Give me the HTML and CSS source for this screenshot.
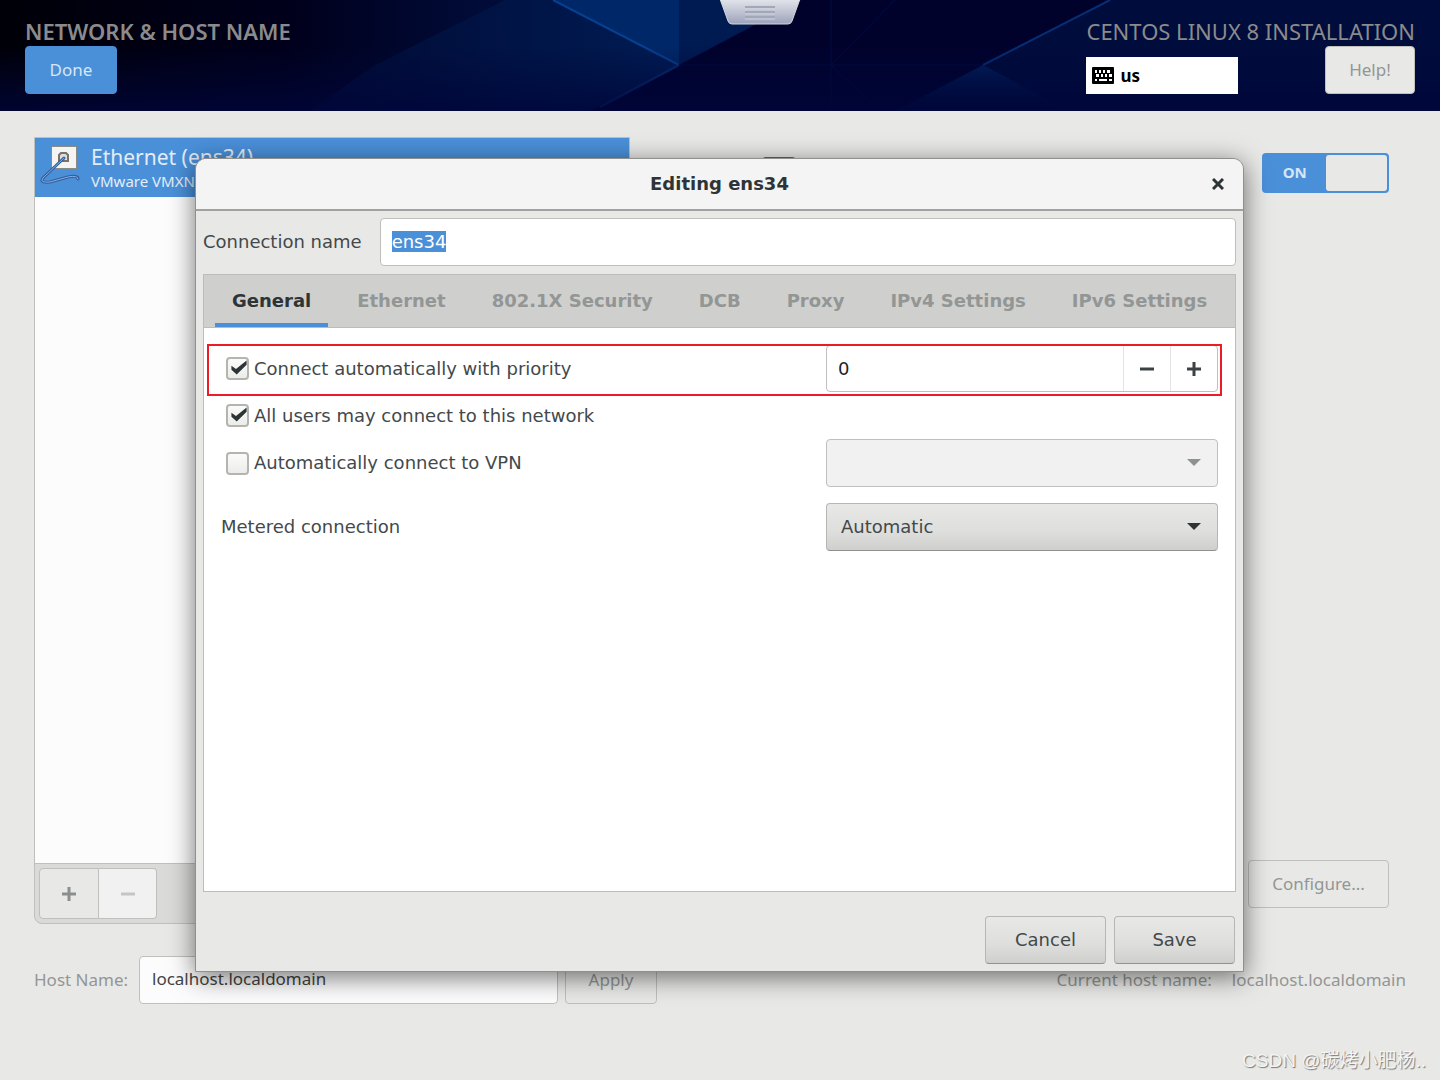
FILE: index.html
```html
<!DOCTYPE html>
<html lang="en">
<head>
<meta charset="utf-8">
<meta name="viewport" content="width=device-width, initial-scale=1">
<title>Network &amp; Host Name</title>
<link rel="stylesheet" href="styles.css">
</head>
<body class="page">
<header class="topbar">
  <svg class="topbar-art" viewBox="0 0 1440 111" preserveAspectRatio="none" aria-hidden="true">
    <defs>
      <linearGradient id="sky" x1="0" x2="1" y1="0" y2="0">
        <stop offset="0" stop-color="#000008"/><stop offset=".2" stop-color="#00001c"/>
        <stop offset=".32" stop-color="#000a35"/><stop offset=".46" stop-color="#001548"/>
        <stop offset=".48" stop-color="#00002a"/><stop offset=".7" stop-color="#000530"/>
        <stop offset="1" stop-color="#000a38"/>
      </linearGradient>
      <linearGradient id="facet" x1="0" x2="1" y1="0" y2="0">
        <stop offset="0" stop-color="#000a34"/><stop offset="1" stop-color="#001c54"/>
      </linearGradient>
      <linearGradient id="fade" x1="0" x2="0" y1="0" y2="1">
        <stop offset="0" stop-color="#00083a" stop-opacity="0"/><stop offset="1" stop-color="#00053a" stop-opacity=".8"/>
      </linearGradient>
      <linearGradient id="ray" x1="0" x2="0" y1="0" y2="1">
        <stop offset="0" stop-color="#00205c"/><stop offset="1" stop-color="#000a38"/>
      </linearGradient>
    </defs>
    <rect width="1440" height="111" fill="url(#sky)"/>
    <path d="M310 111 375 65 505 0H555L679 65 595 111Z" fill="url(#facet)"/>
    <path d="M553 0H679V65Z" fill="#002868"/>
    <path d="M679 0H802L757 27 679 65Z" fill="#001a52"/>
    <path d="M679 65 802 0H1110L983 65 895 111H590Z" fill="#00022c"/>
    <path d="M983 65 1110 0H1440V111H1070Z" fill="#000c3c"/>
    <path d="M983 65 895 111H1070Z" fill="url(#ray)"/>
    <path d="M553 0 679 65" stroke="#084090" stroke-width="2" fill="none"/>
    <path d="M679 65 600 107M983 65 1110 0" stroke="#062e74" stroke-width="2" fill="none"/>
    <path d="M679 65H983M831 0V111M831 65 895 0M831 65 868 100" stroke="#000c40" fill="none"/>
    <rect y="45" width="1440" height="66" fill="url(#fade)"/>
  </svg>
  <div class="topbar-left">
    <h1 class="spoke-title">NETWORK &amp; HOST NAME</h1>
    <button class="btn btn-done" type="button">Done</button>
  </div>
  <div class="topbar-right">
    <p class="distro">CENTOS LINUX 8 INSTALLATION</p>
    <div class="topbar-tools">
      <div class="layout-indicator">
        <svg class="keyboard-icon" viewBox="0 0 22 17" aria-hidden="true">
          <rect width="22" height="17" rx="1" fill="#000"/>
          <path d="M3 3h2v3H3zM7 3h2v3H7zM11 3h2v3h-2zM15 3h3v3h-3zM4 7h3v3H4zM9 7h2v3H9zM13 7h2v3h-2zM17 7h3v3h-3zM3 12h2v2H3zM7 12h8v2H7zM17 12h3v2h-3z" fill="#fff"/>
        </svg>
        <span>us</span>
      </div>
      <button class="btn btn-help" type="button">Help!</button>
    </div>
  </div>
  <div class="vm-handle" aria-hidden="true">
    <svg viewBox="0 0 80 25">
      <defs><linearGradient id="tab" x1="0" x2="0" y1="0" y2="1"><stop offset="0" stop-color="#e4e6ec"/><stop offset="1" stop-color="#9da2ba"/></linearGradient></defs>
      <path d="M0-1H80L72 21Q71 24 68 24H12Q9 24 8 21Z" fill="url(#tab)" stroke="#d6d6dc"/>
      <path d="M25 7H55M25 12H55M25 17H55" stroke="#a2a8b8" stroke-width="2"/>
      <path d="M25 9H55M25 14H55M25 19H55" stroke="#cfd3de"/>
    </svg>
  </div>
</header>

<main class="spoke">
  <div class="network">
    <section class="devices" aria-label="Network devices">
      <div class="device-list">
        <div class="device">
          <svg class="device-icon" viewBox="0 0 40 44" aria-hidden="true">
            <rect x="11.500" y="3.500" width="25" height="22" fill="#f4f4f2" stroke="#8b8b86"/>
            <path d="M19 18V12L21 10H26L28 12V18Z" fill="#ddd" stroke="#77736c" stroke-width="2"/>
            <path d="M24 15 3 35Q-1 40 10 39L28 34Q38 32 38 36" fill="none" stroke="#315e9c" stroke-width="3" stroke-linecap="round"/>
            <path d="M24 15 3 35Q-1 40 10 39L28 34Q38 32 38 36" fill="none" stroke="#86aee4" stroke-linecap="round"/>
          </svg>
          <div class="device-text">
            <span class="device-name">Ethernet (ens34)</span>
            <span class="device-model">VMware VMXNET3 Ethernet Controller</span>
          </div>
        </div>
      </div>
      <div class="device-toolbar">
        <button class="tool" type="button" aria-label="Add device"><svg viewBox="0 0 16 16"><path d="M1 8H15M8 1V15" stroke="#8b8e8f" stroke-width="3"/></svg></button>
        <button class="tool tool-off" type="button" aria-label="Remove device" disabled><svg viewBox="0 0 16 16"><path d="M1 8H15" stroke="#c4c5c4" stroke-width="3"/></svg></button>
      </div>
    </section>
    <section class="details" aria-label="Device details">
      <div class="details-head">
        <span class="details-icon"></span>
        <label class="switch"><input class="switch-input" type="checkbox" role="switch" aria-label="Device enabled" checked><span class="switch-on">ON</span><span class="switch-knob"></span></label>
      </div>
      <button class="btn btn-flat btn-configure" type="button">Configure...</button>
    </section>
  </div>
  <form class="host">
    <label class="host-label" for="host">Host Name:</label>
    <input class="field host-input" id="host" type="text" value="localhost.localdomain">
    <button class="btn btn-flat btn-apply" type="button">Apply</button>
    <p class="current"><span>Current host name:</span><span>localhost.localdomain</span></p>
  </form>
</main>

<div class="dialog" role="dialog" aria-labelledby="dialog-title">
  <div class="titlebar">
    <h2 class="dialog-title" id="dialog-title">Editing ens34</h2>
    <button class="close" type="button" aria-label="Close"><svg viewBox="0 0 12 12"><path d="M1 1 11 11M11 1 1 11" stroke="#2e3436" stroke-width="3"/></svg></button>
  </div>
  <form class="dialog-body">
    <div class="name-row">
      <label for="conn">Connection name</label>
      <input class="field name-input" id="conn" type="text" value="ens34">
    </div>
    <div class="notebook">
      <div class="tabs" role="tablist">
        <button class="tab tab-active" type="button" role="tab" aria-selected="true">General</button>
        <button class="tab" type="button" role="tab">Ethernet</button>
        <button class="tab" type="button" role="tab">802.1X Security</button>
        <button class="tab" type="button" role="tab">DCB</button>
        <button class="tab" type="button" role="tab">Proxy</button>
        <button class="tab" type="button" role="tab">IPv4 Settings</button>
        <button class="tab" type="button" role="tab">IPv6 Settings</button>
      </div>
      <div class="tab-page">
        <div class="row row-marked">
          <label class="check"><input class="check-box" type="checkbox" checked>Connect automatically with priority</label>
          <div class="spin">
            <input class="spin-input" type="number" value="0" aria-label="Priority">
            <button class="spin-btn" type="button" aria-label="Decrease"><svg viewBox="0 0 16 16"><path d="M1 8H15" stroke="#3c4243" stroke-width="3"/></svg></button>
            <button class="spin-btn" type="button" aria-label="Increase"><svg viewBox="0 0 16 16"><path d="M1 8H15M8 1V15" stroke="#3c4243" stroke-width="3"/></svg></button>
          </div>
        </div>
        <div class="row">
          <label class="check"><input class="check-box" type="checkbox" checked>All users may connect to this network</label>
        </div>
        <div class="row">
          <label class="check"><input class="check-box" type="checkbox">Automatically connect to VPN</label>
          <div class="combo combo-off">
            <select class="combo-select" aria-label="VPN connection" disabled><option></option></select>
            <svg class="combo-arrow" viewBox="0 0 14 8"><path d="M0 0H14L7 7Z" fill="#8e9192"/></svg>
          </div>
        </div>
        <div class="row row-spaced">
          <label for="metered">Metered connection</label>
          <div class="combo">
            <select class="combo-select" id="metered"><option>Automatic</option><option>Yes</option><option>No</option></select>
            <svg class="combo-arrow" viewBox="0 0 14 8"><path d="M0 0H14L7 7Z" fill="#2e3436"/></svg>
          </div>
        </div>
      </div>
    </div>
    <div class="actions">
      <button class="action" type="button">Cancel</button>
      <button class="action" type="button">Save</button>
    </div>
  </form>
</div>

<p class="watermark">CSDN @碳烤小肥杨..</p>
<script src="script.js"></script>
</body>
</html>
```
FILE: styles.css
```css
* { box-sizing: border-box; }

.page {
  position: relative;
  display: flex;
  flex-direction: column;
  min-height: 100vh;
  margin: 0;
  background: #e8e8e6;
  color: #939695;
  font: 17px/24px "Noto Sans", "Open Sans", sans-serif;
}

h1, h2, p { margin: 0; }
button, input, select { font: inherit; color: inherit; margin: 0; }
svg { display: block; }

/* Top bar */
.topbar {
  position: relative;
  display: flex;
  justify-content: space-between;
  height: 111px;
  padding: 16px 25px;
}
.topbar-art { position: absolute; inset: 0; width: 100%; height: 100%; }
.topbar-left, .topbar-right { position: relative; display: flex; flex-direction: column; }
.topbar-left { align-items: flex-start; }
.spoke-title, .distro { font-size: 22px; line-height: 30px; color: #8b8b8b; }
.spoke-title { font-weight: 600; }
.distro { font-weight: 400; }
.topbar-tools { display: flex; justify-content: space-between; align-items: flex-end; }
.vm-handle { position: absolute; left: 50%; top: 0; width: 80px; }

.btn {
  height: 48px;
  padding: 0 22px;
  border: 1px solid #bfbfbb;
  border-radius: 4px;
  background: #e8e8e6;
}
.btn-done { width: 92px; border-color: #4a90d9; background: #4a90d9; color: #d8e5f3; }
.btn-help { width: 90px; }
.btn-flat { background: transparent; }

.layout-indicator {
  display: flex;
  align-items: center;
  gap: 6px;
  width: 152px;
  height: 37px;
  padding: 0 6px;
  background: #fff;
  color: #000;
  font-weight: 700;
}
.keyboard-icon { width: 22px; height: 17px; }

/* Spoke */
.spoke { flex: 1; display: flex; flex-direction: column; gap: 32px; padding: 26px 34px 76px; }
.network { flex: 1; display: flex; }
.devices {
  flex: 0 0 596px;
  display: flex;
  flex-direction: column;
  border: 1px solid #bfbfbb;
  border-radius: 0 0 8px 8px;
  background: #dadad8;
}
.device-list { flex: 1; border-bottom: 1px solid #bfbfbb; background: #fcfcfc; }
.device { display: flex; gap: 11px; height: 59px; padding: 5px; background: #4a90d9; color: #e4edf7; }
.device-icon { width: 40px; height: 44px; }
.device-text { display: flex; flex-direction: column; }
.device-name { font-size: 21px; line-height: 28px; }
.device-model { font-size: 15px; line-height: 21px; }
.device-toolbar { display: flex; height: 59px; padding: 4px; }
.tool {
  display: grid;
  place-items: center;
  width: 60px;
  height: 51px;
  padding: 0;
  border: 1px solid #bfbfbb;
  border-radius: 4px 0 0 4px;
  background: #e8e8e6;
}
.tool svg, .spin-btn svg { width: 16px; height: 16px; }
.tool-off { width: 58px; border-left: 0; border-radius: 0 4px 4px 0; background: #f1f1f1; }

.details { flex: 1; display: flex; flex-direction: column; justify-content: space-between; padding: 16px 17px 16px 132px; }
.details-head { display: flex; justify-content: space-between; align-items: flex-start; padding-bottom: 40px; }
.details-icon { width: 34px; height: 26px; margin-top: 4px; border-radius: 4px; background: #666; }
.switch {
  display: grid;
  grid-template-columns: 1fr 1fr;
  width: 127px;
  height: 40px;
  border: 2px solid #4a90d9;
  border-radius: 4px;
  background: #4a90d9;
}
.switch-input { grid-area: 1 / 1 / 2 / 3; width: 100%; height: 100%; margin: 0; opacity: 0; }
.switch-on { grid-area: 1 / 1; place-self: start center; line-height: 34px; font-size: 15px; font-weight: 700; color: #d8e5f3; }
.switch-knob { grid-area: 1 / 2; border-radius: 3px; background: #e8e8e6; }
.btn-configure { align-self: flex-end; width: 141px; }

.host { display: flex; align-items: center; }
.host-label { width: 105px; }
.field {
  height: 48px;
  padding: 0 12px;
  border: 1px solid #bfbfbb;
  border-radius: 4px;
  background: #fff;
  outline: 0;
}
.host-input { width: 419px; padding-bottom: 3px; background: #fcfcfc; color: #444; }
.btn-apply { width: 92px; margin-left: 7px; }
.current { display: flex; gap: 20px; margin-left: auto; }

/* Connection editor */
.dialog {
  position: absolute;
  top: 158px;
  left: 195px;
  right: 196px;
  border: 1px solid #8f8f8d;
  border-radius: 11px 11px 0 0;
  background: #e8e8e6;
  box-shadow: 0 5px 26px rgba(0, 0, 0, .55);
  color: #43494b;
  font: 18px/24px "DejaVu Sans", sans-serif;
}
.titlebar {
  display: grid;
  grid-template-columns: 50px 1fr 50px;
  align-items: center;
  height: 52px;
  border-bottom: 2px solid #a1a19f;
  border-radius: 10px 10px 0 0;
  background: #f4f4f4;
}
.dialog-title { grid-column: 2; font-size: 18px; font-weight: 700; line-height: 26px; text-align: center; color: #2e3436; }
.close { display: grid; place-items: center; width: 50px; height: 50px; padding: 0; border: 0; background: none; }
.close svg { width: 12px; height: 12px; }
.dialog-body { padding: 7px; }
.name-row { display: flex; align-items: center; gap: 18px; margin-bottom: 8px; }
.name-input { flex: 1; padding: 0 11px 2px; color: #2e3436; }
.name-input::selection { background: #4a90d9; color: #fff; }

.notebook { border: 1px solid #bcbcb9; background: #fff; }
.tabs { display: flex; gap: 12px; height: 53px; padding: 0 11px; border-bottom: 1px solid #bcbcb9; background: #cfcfcd; }
.tab {
  height: 52px;
  padding: 0 17px;
  border: 0;
  border-top: 4px solid transparent;
  border-bottom: 4px solid transparent;
  background: none;
  font-weight: 700;
  color: #929695;
  white-space: nowrap;
}
.tab-active { border-bottom-color: #4a90d9; color: #2e3436; }

.tab-page { min-height: 563px; padding: 17px; }
.row { position: relative; display: grid; grid-template-columns: 1fr 392px; align-items: center; min-height: 47px; }
.row-spaced { margin-top: 16px; }
/* Red frame drawn over the row */
.row-marked::after {
  content: "";
  position: absolute;
  inset: -1px -4px -4px -14px;
  border: 2px solid #ed1c24;
  pointer-events: none;
}
.check { display: flex; align-items: center; gap: 5px; padding-left: 5px; }
.check-box {
  appearance: none;
  display: grid;
  width: 23px;
  height: 23px;
  border: 2px solid #b4b4b0;
  border-radius: 4px;
  background: linear-gradient(#fbfbfb, #ececea);
}
.check-box:checked::before {
  content: "";
  width: 19px;
  height: 19px;
  background: #2e3436;
  clip-path: polygon(18% 36%, 42% 52%, 98% 8%, 98% 30%, 46% 82%, 18% 56%);
}
.spin {
  display: flex;
  height: 47px;
  border: 1px solid #bfbfbb;
  border-radius: 4px;
  background: #fff;
}
.spin-input { appearance: textfield; flex: 1; min-width: 0; padding: 0 11px; border: 0; background: none; color: #1e2224; outline: 0; }
.spin-input::-webkit-inner-spin-button { appearance: none; margin: 0; }
.spin-btn { display: grid; place-items: center; width: 47px; padding: 0; border: 0; border-left: 1px solid #e4e4e2; background: none; }
.combo {
  display: grid;
  align-items: center;
  height: 48px;
  border: 1px solid #b6b6b2;
  border-bottom-color: #91918e;
  border-radius: 4px;
  background: linear-gradient(#e8e8e6, #dededc 60%, #cfcfcd);
}
.combo-off { border-color: #bfbfbb; background: #f1f1f1; }
.combo-select { appearance: none; grid-area: 1 / 1; width: 100%; height: 100%; padding: 0 14px; border: 0; background: none; }
.combo-arrow { grid-area: 1 / 1; justify-self: end; width: 14px; height: 8px; margin-right: 16px; pointer-events: none; }

.actions { display: flex; justify-content: flex-end; gap: 8px; padding: 24px 1px 0; }
.action {
  width: 121px;
  height: 48px;
  border: 1px solid #b6b6b2;
  border-bottom-color: #91918e;
  border-radius: 4px;
  background: linear-gradient(#e8e8e6, #dededc 60%, #cfcfcd);
}

.watermark {
  position: absolute;
  right: 14px;
  bottom: 5px;
  color: #f4f4f2;
  font: 19px/28px "Liberation Sans", "Noto Sans CJK SC", sans-serif;
  text-shadow: 1px 1px 1px #777;
}
```
FILE: script.js
```js
const nameField = document.getElementById("conn");
nameField.focus();
nameField.select();
```
